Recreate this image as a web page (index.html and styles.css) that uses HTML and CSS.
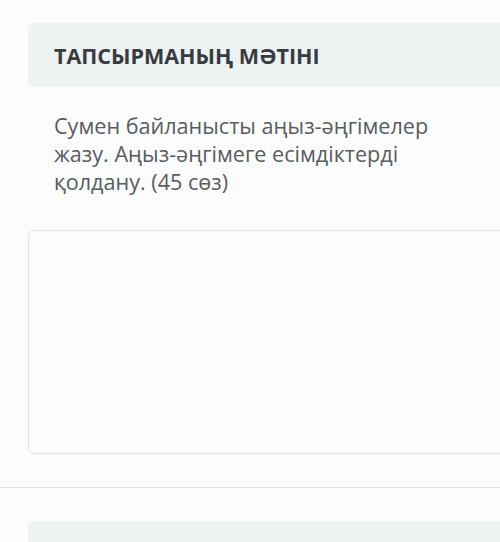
FILE: index.html
```html
<!DOCTYPE html>
<html lang="kk">
<head>
<meta charset="utf-8">
<link rel="stylesheet" href="styles.css">
</head>
<body>
  <section class="task">
    <div class="task-inner">
      <div class="card-head"><h2 class="card-title">ТАПСЫРМАНЫҢ МӘТІНІ</h2></div>
      <p class="task-text">Сумен байланысты аңыз-әңгімелер жазу. Аңыз-әңгімеге есімдіктерді қолдану. (45 сөз)</p>
      <textarea class="answer" aria-label="Жауап"></textarea>
    </div>
  </section>
  <section class="task">
    <div class="task-inner">
      <div class="card-head"></div>
    </div>
  </section>
</body>
</html>
```
FILE: styles.css
```css
html, body {
  margin: 0;
  padding: 0;
}
body {
  background: #fcfcfc;
  font-family: "Open Sans", "Noto Sans", sans-serif;
  overflow: hidden;
  height: 542px;
}
.task {
  border-bottom: 1px solid #e4e4e4;
}
.task + .task {
  border-bottom: none;
}
.task-inner {
  padding: 23px 0 33px 28px;
  margin-right: -20px;
}
.task + .task .task-inner {
  padding-top: 33px;
}
.card-head {
  height: 64px;
  background: #eef2f2;
  border-radius: 6px 0 0 6px;
  display: flex;
  align-items: center;
  padding-left: 26px;
}
.card-title {
  margin: 0;
  font-size: 21.5px;
  font-weight: 700;
  color: #363c40;
}
.task-text {
  margin: 25px 0 0 26px;
  width: 410px;
  font-size: 21.6px;
  line-height: 28px;
  color: #585d60;
}
.answer {
  display: block;
  box-sizing: border-box;
  margin: 34px 0 0 0;
  width: 100%;
  height: 224px;
  border: 1px solid #e2e2e2;
  border-radius: 6px 0 0 6px;
  background: #fdfdfd;
  resize: none;
}
```
